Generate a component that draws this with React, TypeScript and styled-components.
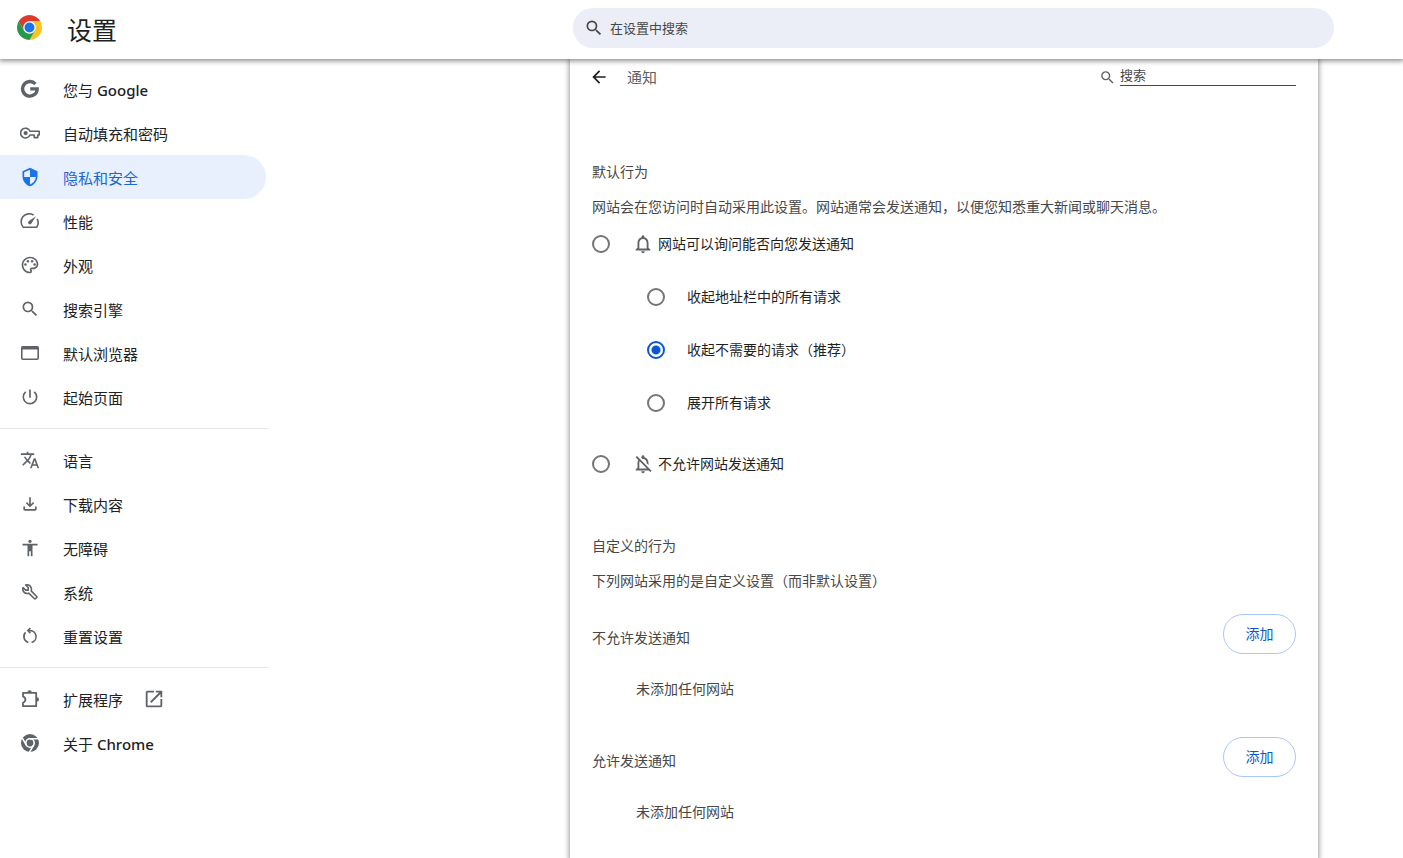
import React, { useState } from "react";
import styled, { createGlobalStyle, css } from "styled-components";
import {
  MdAccessibility,
  MdArrowBack,
  MdNotificationsNone,
  MdOpenInNew,
  MdOutlineFileDownload,
  MdOutlineNotificationsOff,
  MdOutlinePalette,
  MdPowerSettingsNew,
  MdSearch,
  MdSecurity,
  MdTranslate,
} from "react-icons/md";

const GlobalStyle = createGlobalStyle`
  *, *::before, *::after { box-sizing: border-box; }
  body {
    margin: 0;
    background: #fff;
    color: #1f1f1f;
    font-family: "Noto Sans", "Noto Sans CJK SC", sans-serif;
    font-size: 14px;
    line-height: 20px;
  }
  button, input { font: inherit; color: inherit; }
  h1, h2, h3, p, ul, fieldset { margin: 0; padding: 0; border: 0; }
`;

const Page = styled.div`
  min-height: 100vh;
  display: flex;
  flex-direction: column;
`;

const Toolbar = styled.header`
  position: sticky;
  top: 0;
  z-index: 2;
  height: 59px;
  flex: none;
  display: grid;
  grid-template-columns: minmax(200px, 573fr) minmax(0, 761fr) 69fr;
  background: #fff;
  box-shadow: 0 1px 5px 1px rgba(0, 0, 0, 0.45);
`;

const Brand = styled.div`
  display: flex;
  align-items: center;
  gap: 25px;
  padding-left: 17px;
  svg { margin-bottom: 4px; }
`;

const Title = styled.h1`
  font-size: 25px;
  line-height: 32px;
  font-weight: 400;
`;

const SearchPill = styled.label`
  display: flex;
  align-items: center;
  gap: 6px;
  height: 40px;
  margin-top: 8px;
  padding: 0 11px;
  border-radius: 20px;
  background: #ebeef7;
  color: #474747;
`;

const BareInput = styled.input`
  flex: 1;
  min-width: 0;
  padding: 0;
  border: 0;
  outline: 0;
  background: transparent;
  font-size: 13px;
  line-height: 20px;
  &::placeholder { color: #474747; opacity: 1; }
`;

const Body = styled.div`
  flex: 1;
  display: grid;
  grid-template-columns: minmax(268px, 570fr) minmax(0, 748fr) 85fr;
`;

const Sidebar = styled.nav`
  width: 268px;
  padding-top: 8px;
`;

const MenuGroup = styled.ul`
  list-style: none;
  & + & {
    margin-top: 9px;
    padding-top: 9px;
    border-top: 1px solid #e6e6e6;
  }
`;

const MenuLink = styled.a<{ $active?: boolean }>`
  display: flex;
  align-items: center;
  height: 44px;
  margin-right: 2px;
  padding-left: 20px;
  border-radius: 0 22px 22px 0;
  font-size: 15px;
  text-decoration: none;
  color: #202124;
  > svg { flex: none; color: #5f6368; }
  ${(p) =>
    p.$active &&
    css`
      background: #e8f0fe;
      color: #1967d2;
      > svg { color: #1a73e8; }
    `}
`;

const MenuText = styled.span`
  margin: 2px 20px 0 23px;
`;

const Latin = styled.span`
  font-weight: 500;
`;

const Card = styled.main`
  padding: 0 22px 24px;
  background: #fff;
  box-shadow: 0 0 5px 1px rgba(0, 0, 0, 0.4);
`;

const CardHeader = styled.div`
  display: flex;
  align-items: center;
  height: 36px;
`;

const BackButton = styled.button`
  display: flex;
  margin: 0 18px 0 -3px;
  padding: 0;
  border: 0;
  background: none;
  cursor: pointer;
`;

const CardTitle = styled.h2`
  flex: 1;
  font-size: 15px;
  font-weight: 400;
  color: #5f5f5f;
`;

const SiteSearch = styled.label`
  display: flex;
  align-items: center;
  gap: 4px;
  color: #5f6368;
`;

const UnderlineBox = styled.span`
  display: flex;
  width: 176px;
  height: 22px;
  margin-bottom: 4px;
  border-bottom: 1px solid #474747;
`;

const Section = styled.section`
  padding-top: 67px;
  & + & { padding-top: 52px; }
`;

const SectionTitle = styled.h3`
  font-size: 14px;
  font-weight: 400;
  color: #474747;
`;

const Hint = styled.p`
  margin-top: 15px;
  color: #474747;
`;

const OptionList = styled.fieldset`
  display: flex;
  flex-direction: column;
  margin-top: 7px;
`;

const Option = styled.label<{ $nested?: boolean }>`
  display: flex;
  align-items: center;
  height: ${(p) => (p.$nested ? 53 : 40)}px;
  margin-left: ${(p) => (p.$nested ? 55 : 0)}px;
  > svg { margin-right: 4px; color: #5f6368; }
`;

const NestedOptions = styled.div`
  padding: 6px 0 15px;
`;

const Radio = styled.input`
  appearance: none;
  width: 18px;
  height: 18px;
  margin: 0 22px 0 0;
  border: 2px solid #757575;
  border-radius: 50%;
  &:checked {
    border-color: #0b57d0;
    background: radial-gradient(circle, #0b57d0 4px, transparent 5px);
  }
`;

const SiteGroup = styled.div`
  margin-top: 23px;
`;

const SiteHeader = styled.div`
  display: flex;
  align-items: center;
  justify-content: space-between;
  height: 40px;
`;

const SiteTitle = styled(SectionTitle)`
  padding-top: 8px;
`;

const AddButton = styled.button`
  width: 73px;
  height: 40px;
  padding: 0;
  border: 1px solid #a8c7fa;
  border-radius: 20px;
  background: #fff;
  color: #0b57d0;
  cursor: pointer;
`;

const EmptyNote = styled.p`
  margin: 25px 0 0 44px;
  padding-bottom: 15px;
  color: #474747;
`;

const ChromeLogo = () => (
  <svg width="25" height="25" viewBox="0 0 48 48" aria-hidden="true">
    <path fill="#dd3a2b" d="M24 12h20.78A24 24 0 0 0 3.22 12l10.39 18z" />
    <path fill="#fcc31e" d="M34.39 30 24 48a24 24 0 0 0 20.78-36H24z" />
    <path fill="#249a46" d="M13.61 30 3.22 12A24 24 0 0 0 24 48l10.39-18z" />
    <circle cx="24" cy="24" r="12" fill="#fff" />
    <circle cx="24" cy="24" r="9.5" fill="#1a73e8" />
  </svg>
);

const MenuSvg = ({ children }: { children: React.ReactNode }) => (
  <svg
    width="20"
    height="20"
    viewBox="0 0 20 20"
    fill="none"
    stroke="currentColor"
    strokeWidth="1.6"
    aria-hidden="true"
  >
    {children}
  </svg>
);

const ChromeMono = () => (
  <MenuSvg>
    <circle cx="10" cy="10" r="9" fill="currentColor" stroke="none" />
    <circle cx="10" cy="10" r="4.2" stroke="#fff" />
    <path d="M10 5.8h8.6M6.4 12.1 2 4.6M13.6 12.1 9.2 19.6" stroke="#fff" />
  </MenuSvg>
);

const GoogleIcon = () => (
  <MenuSvg>
    <path d="M15.4 5A7.3 7.3 0 1 0 17.2 9.9H10.2" strokeWidth="3.4" />
  </MenuSvg>
);

const KeyIcon = () => (
  <MenuSvg>
    <path d="M10 8.2A4.9 4.9 0 1 0 10 12h4.2v2.6h3.6V12h1.4V8.2z" strokeLinejoin="round" />
    <circle cx="5.6" cy="10.1" r="2.1" fill="currentColor" stroke="none" />
  </MenuSvg>
);

const SpeedIcon = () => (
  <MenuSvg>
    <path d="M13.6 4.1A8 8 0 0 0 3.3 16.2h13.4a8 8 0 0 0 .4-8.4" />
    <path d="M16 5.2 11.4 12.6a1.8 1.8 0 1 1-2.5-2.5z" fill="currentColor" stroke="none" />
  </MenuSvg>
);

const WindowIcon = () => (
  <MenuSvg>
    <rect x="1.8" y="3.8" width="16.4" height="12.4" rx="1" />
    <path d="M1.8 5h16.4" strokeWidth="3" />
  </MenuSvg>
);

const WrenchIcon = () => (
  <svg
    width="20"
    height="20"
    viewBox="-2 -2 28 28"
    fill="none"
    stroke="currentColor"
    strokeWidth="2.2"
    strokeLinejoin="round"
    aria-hidden="true"
  >
    <path d="M21.4 18.4l-7.8-8c.9-2.4.2-5-1.5-6.9-2-1.9-4.4-2-6.2-1.4l3.6 3.7v3.6H6L2.3 5.8c-.7 2-.6 4.4 1.3 6.3 1.9 1.9 4.4 2.3 6.7 1.5l8 7.9c.4.4 1 .4 1.4 0l1.7-1.7c.4-.4.4-1 0-1.4z" />
  </svg>
);

const ResetIcon = () => (
  <MenuSvg>
    <path d="M8.8 4.6h1.4a6 6 0 0 1 1.4 11.8M8.4 16.4A6 6 0 0 1 5.6 6.4" />
    <path d="M10.4 2 7.8 4.6l2.6 2.6" />
  </MenuSvg>
);

const ExtensionIcon = () => (
  <MenuSvg>
    <path
      d="M3 3.8h13.2v13.4H3v-3.4c3.2-1.2 3.2-5.2 0-6.4z"
      strokeWidth="1.8"
      strokeLinejoin="round"
    />
    <path
      d="M7.4 3.4a2.2 2.2 0 0 1 4.4 0zM16.8 8.2a2.2 2.2 0 0 1 0 4.4z"
      fill="currentColor"
      stroke="none"
    />
  </MenuSvg>
);

type Item = {
  text: string;
  latin?: string;
  icon: React.ReactNode;
  active?: boolean;
  external?: boolean;
};

const groups: Item[][] = [
  [
    { text: "您与 ", latin: "Google", icon: <GoogleIcon /> },
    { text: "自动填充和密码", icon: <KeyIcon /> },
    { text: "隐私和安全", icon: <MdSecurity size={20} />, active: true },
    { text: "性能", icon: <SpeedIcon /> },
    { text: "外观", icon: <MdOutlinePalette size={20} /> },
    { text: "搜索引擎", icon: <MdSearch size={20} /> },
    { text: "默认浏览器", icon: <WindowIcon /> },
    { text: "起始页面", icon: <MdPowerSettingsNew size={20} /> },
  ],
  [
    { text: "语言", icon: <MdTranslate size={20} /> },
    { text: "下载内容", icon: <MdOutlineFileDownload size={20} /> },
    { text: "无障碍", icon: <MdAccessibility size={20} /> },
    { text: "系统", icon: <WrenchIcon /> },
    { text: "重置设置", icon: <ResetIcon /> },
  ],
  [
    { text: "扩展程序", icon: <ExtensionIcon />, external: true },
    { text: "关于 ", latin: "Chrome", icon: <ChromeMono /> },
  ],
];

const promptModes = [
  { id: "quiet", text: "收起地址栏中的所有请求" },
  { id: "auto", text: "收起不需要的请求（推荐）" },
  { id: "loud", text: "展开所有请求" },
];

export default function App() {
  const [mode, setMode] = useState("auto");

  return (
    <Page>
      <GlobalStyle />
      <Toolbar>
        <Brand>
          <ChromeLogo />
          <Title>设置</Title>
        </Brand>
        <SearchPill>
          <MdSearch size={20} />
          <BareInput type="text" placeholder="在设置中搜索" aria-label="在设置中搜索" />
        </SearchPill>
      </Toolbar>
      <Body>
        <Sidebar>
          {groups.map((items, index) => (
            <MenuGroup key={index}>
              {items.map((item) => (
                <li key={item.text}>
                  <MenuLink href="#" $active={item.active}>
                    {item.icon}
                    <MenuText>
                      {item.text}
                      {item.latin && <Latin>{item.latin}</Latin>}
                    </MenuText>
                    {item.external && <MdOpenInNew size={22} />}
                  </MenuLink>
                </li>
              ))}
            </MenuGroup>
          ))}
        </Sidebar>
        <Card>
          <CardHeader>
            <BackButton aria-label="返回">
              <MdArrowBack size={20} />
            </BackButton>
            <CardTitle>通知</CardTitle>
            <SiteSearch>
              <MdSearch size={17} />
              <UnderlineBox>
                <BareInput type="text" placeholder="搜索" aria-label="搜索" />
              </UnderlineBox>
            </SiteSearch>
          </CardHeader>
          <Section>
            <SectionTitle>默认行为</SectionTitle>
            <Hint>网站会在您访问时自动采用此设置。网站通常会发送通知，以便您知悉重大新闻或聊天消息。</Hint>
            <OptionList>
              <Option>
                <Radio type="radio" name="default" />
                <MdNotificationsNone size={22} />
                网站可以询问能否向您发送通知
              </Option>
              <NestedOptions>
                {promptModes.map((option) => (
                  <Option key={option.id} $nested>
                    <Radio
                      type="radio"
                      name="mode"
                      checked={mode === option.id}
                      onChange={() => setMode(option.id)}
                    />
                    {option.text}
                  </Option>
                ))}
              </NestedOptions>
              <Option>
                <Radio type="radio" name="default" />
                <MdOutlineNotificationsOff size={22} />
                不允许网站发送通知
              </Option>
            </OptionList>
          </Section>
          <Section>
            <SectionTitle>自定义的行为</SectionTitle>
            <Hint>下列网站采用的是自定义设置（而非默认设置）</Hint>
            {["不允许发送通知", "允许发送通知"].map((text) => (
              <SiteGroup key={text}>
                <SiteHeader>
                  <SiteTitle>{text}</SiteTitle>
                  <AddButton>添加</AddButton>
                </SiteHeader>
                <EmptyNote>未添加任何网站</EmptyNote>
              </SiteGroup>
            ))}
          </Section>
        </Card>
      </Body>
    </Page>
  );
}
